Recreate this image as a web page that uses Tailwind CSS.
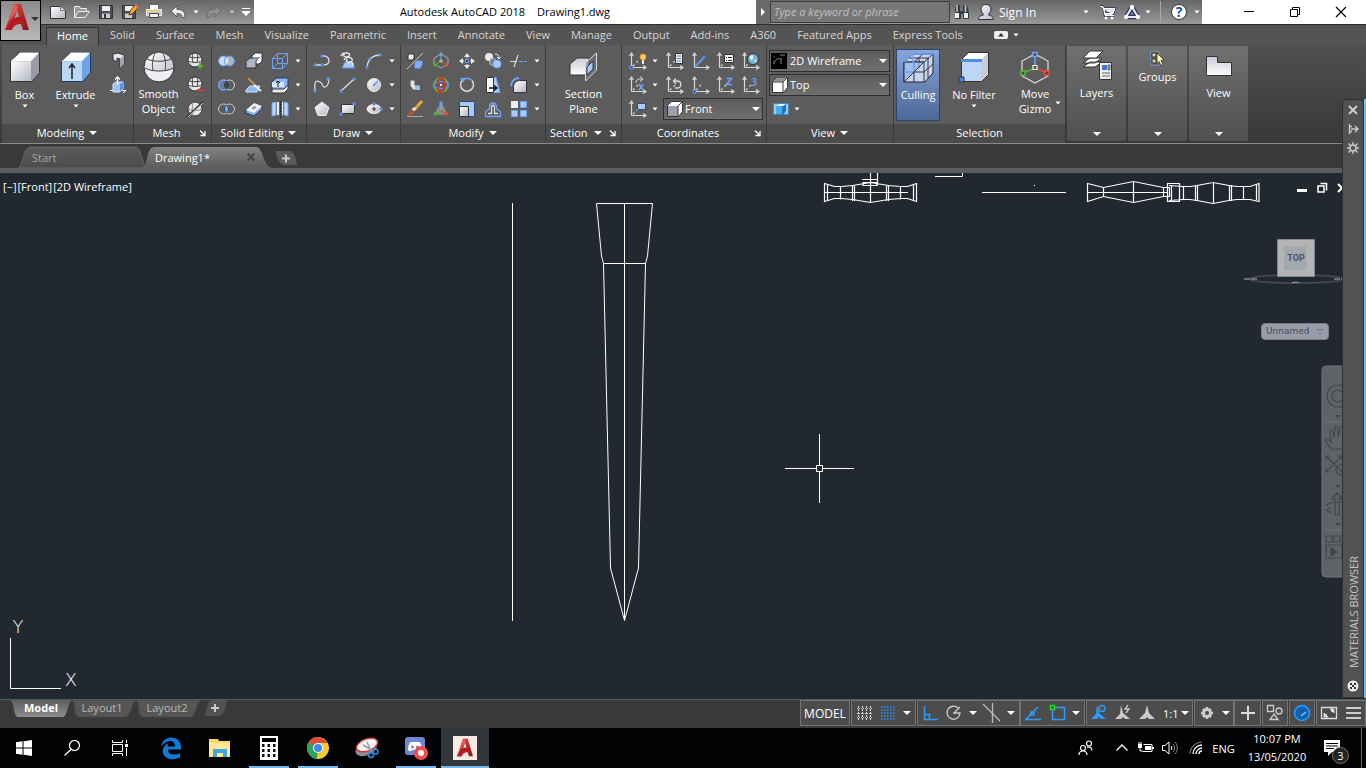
<!DOCTYPE html>
<html lang="en">
  <head>
    <meta charset="UTF-8" />
    <meta name="viewport" content="width=device-width, initial-scale=1.0" />
    <title>Autodesk AutoCAD 2018 - Drawing1.dwg</title>
    <script src="https://cdn.jsdelivr.net/npm/@tailwindcss/browser@4"></script>
  </head>
  <body class="bg-[#212830] font-['Open_Sans','Noto_Sans',sans-serif] text-[11px] leading-[15px] text-white">
    <!-- Shared gradients and arrows -->
    <svg class="absolute size-0" aria-hidden="true">
      <defs>
        <linearGradient id="lite" x1="0" y1="0" x2="1" y2="1"><stop offset="0" stop-color="#fff" /><stop offset="1" stop-color="#b4b7c2" /></linearGradient>
        <linearGradient id="liteV" x1="0" y1="0" x2="0" y2="1"><stop offset="0" stop-color="#c9cbd6" /><stop offset="1" stop-color="#fff" /></linearGradient>
        <linearGradient id="red" x1="0" y1="0" x2="1" y2="1"><stop offset="0" stop-color="#e8474a" /><stop offset="1" stop-color="#8f1216" /></linearGradient>
        <linearGradient id="tabOff" x1="0" y1="0" x2="0" y2="1"><stop offset="0" stop-color="#5a5a5a" /><stop offset="1" stop-color="#4c4c4c" /></linearGradient>
        <linearGradient id="tabOn" x1="0" y1="0" x2="0" y2="1"><stop offset="0" stop-color="#828282" /><stop offset="1" stop-color="#5c5c5c" /></linearGradient>
        <linearGradient id="tabModel" x1="0" y1="0" x2="0" y2="1"><stop offset="0" stop-color="#5e5e5e" /><stop offset="1" stop-color="#8c8c8c" /></linearGradient>
        <symbol id="dd" viewBox="0 0 8 8"><path d="M1.500 2.500h5L4 5.500z" fill="#fff" /></symbol>
        <symbol id="dn" viewBox="0 0 10 10"><path d="M1 3h8L5 7z" fill="#fff" /></symbol>
        <symbol id="corner" viewBox="0 0 8 8"><path d="M1 1.500l4 4M6 2v4.500H1.500" fill="none" stroke="#fff" stroke-width="1.300" /></symbol>
        <symbol id="acad" viewBox="0 0 24 28">
          <path d="M0 27L9 1h7l8 26h-6l-2-6c-4 0-7 1-9 6zM9 17c2-1 4-1 6-1l-3-9z" fill="url(#red)" />
          <path d="M0 27l7-10c3-3 8-4 12-3l1 4c-6-1-11 0-14 9z" fill="#b5171c" />
          <path d="M9 1l-6 18 8-10 1-2 1-4z" fill="#ef6a6a" opacity=".7" />
        </symbol>
        <!-- axes used by all the UCS icons -->
        <symbol id="axes" viewBox="0 0 24 24"><path d="M5.500 18.500V5M3.500 7l2-3 2 3M5.500 18.500H19M17 16.500l3 2-3 2M7 17l1.500-1.500M10.500 13.500L12 12" fill="none" stroke="#d8d8d8" stroke-width="1.200" /></symbol>
      </defs>
    </svg>

    <div class="relative flex min-h-screen flex-col">
      <!-- Title bar -->
      <header class="flex h-6 bg-white">
        <nav class="flex w-[254px] items-center bg-linear-to-b from-[#666] to-[#999] pl-[46px]">
          <button class="w-6" aria-label="New"><svg class="size-6" viewBox="0 0 24 24"><path d="M4.500 6.500h10l5 4v8h-15z" fill="url(#lite)" stroke="#333" /><path d="M14.500 6.500v4h5" fill="#ddd" stroke="#777" /></svg></button>
          <button class="w-6" aria-label="Open"><svg class="size-6" viewBox="0 0 24 24"><path d="M4.500 17.500v-11h5l1 2h6v3" fill="#999" stroke="#eee" /><path d="M4.500 17.500l4-6h11l-4.500 6z" fill="#888" stroke="#eee" /></svg></button>
          <button class="w-6" aria-label="Save"><svg class="size-6" viewBox="0 0 24 24"><path d="M5.500 5.500h13v13h-13z" fill="#4a4e58" stroke="#333" /><path d="M8 6h8v5H8z" fill="#eee" /><path d="M8 13.500h8V18H8z" fill="#ccc" /><path d="M10 14h2v4h-2z" fill="#333" /></svg></button>
          <button class="w-6" aria-label="Save As"><svg class="size-6" viewBox="0 0 24 24"><path d="M4.500 5.500h13v13h-13z" fill="#4a4e58" stroke="#333" /><path d="M7 6h8v5H7z" fill="#eee" /><path d="M7 13.500h7V18H7z" fill="#ccc" /><path d="M11 15l1-4 5-6 3 3-6 6z" fill="#f0a92c" stroke="#5b3a10" /><path d="M17 5l3 3" stroke="#f66" stroke-width="2" /></svg></button>
          <button class="w-6" aria-label="Plot"><svg class="size-6" viewBox="0 0 24 24"><path d="M7.500 4.500h9v5h-9z" fill="#fff" stroke="#666" /><path d="M4.500 9.500h15v6h-15z" fill="#c6c8ce" stroke="#eee" /><path d="M7.500 13.500h9v4h-9z" fill="#f5f5f5" stroke="#444" /><path d="M6 11.500h12" stroke="#f2e34a" stroke-dasharray="1 1" /></svg></button>
          <button class="w-6" aria-label="Undo"><svg class="size-6" viewBox="0 0 24 24"><path d="M5 11l6-5v3.500c5 0 8 1 8 8h-3c0-3-1-4-5-4V17z" fill="#eee" stroke="#444" stroke-width=".8" /></svg></button>
          <button class="w-3" aria-label="Undo list"><svg class="mx-auto size-2"><use href="#dd" /></svg></button>
          <button class="w-6" aria-label="Redo"><svg class="size-6" viewBox="0 0 24 24"><path d="M19 11l-6-5v3.500c-5 0-8 1-8 8h3c0-3 1-4 5-4V17z" fill="#8f8f8f" stroke="#666" stroke-width=".8" /></svg></button>
          <button class="w-3 opacity-60" aria-label="Redo list"><svg class="mx-auto size-2"><use href="#dd" /></svg></button>
          <button class="w-4" aria-label="Customize Quick Access Toolbar"><svg class="mx-auto size-3" viewBox="0 0 12 12"><path d="M2 2.500h8M2 5.500h8L6 9.500z" fill="#fff" stroke="#fff" /></svg></button>
        </nav>
        <h1 class="flex flex-1 items-center justify-center gap-3 pb-0.5 whitespace-pre text-black"><span>Autodesk AutoCAD 2018</span><span>Drawing1.dwg</span></h1>
        <div class="flex w-[446px] shrink-0 items-center bg-linear-to-b from-[#666] to-[#999]">
          <button class="flex h-6 w-[14px] shrink-0 items-center justify-center bg-[#6a6a6a]" aria-label="Collapse search"><svg class="h-2 w-1.5" viewBox="0 0 6 8"><path d="M1 0l4 4-4 4z" fill="#fff" /></svg></button>
          <input type="text" aria-label="Search" placeholder="Type a keyword or phrase" class="h-[22px] w-[180px] shrink-0 border border-[#3c3c3c] bg-[#777] px-[3px] pb-0.5 text-[11px] italic outline-none placeholder:text-[#c0c0c0]" />
          <button class="w-6" aria-label="Find"><svg class="size-6" viewBox="0 0 24 24"><path d="M5 9l1-4h4v6h3V5h4l1 4 1 4v6h-6v-5h-2v5H5v-6z" fill="#333a48" /><path d="M5 13h4v5H5zM14 13h4v5h-4z" fill="#f2f2f2" /><path d="M7 5v7M15.500 5v7" stroke="#ccc" stroke-width="1.500" /></svg></button>
          <button class="flex w-[116px] shrink-0 items-center" type="button"><svg class="size-6" viewBox="0 0 24 24"><path d="M4.500 19.500c0-4 4-4 5-4.500 0-1-2.500-3-2.500-6 0-6 10-6 10 0 0 3-2.500 5-2.500 6 1 .5 5 .5 5 4.500z" fill="url(#lite)" stroke="#2b3140" /></svg><span class="ml-px text-[12px]">Sign In</span><svg class="ml-auto size-2"><use href="#dd" /></svg></button>
          <button class="ml-1.5 w-6" aria-label="App Store"><svg class="size-6" viewBox="0 0 24 24"><path d="M4 6.500h3l2 9h9M8 8.500h11l-2 5H9z" fill="#aebbd4" stroke="#28375c" stroke-width="2.500" /><path d="M4 6.500h3l2 9h9M8 8.500h11l-2 5H9z" fill="#dde5f2" stroke="#fff" /><circle cx="10" cy="18" r="1.500" fill="#fff" /><circle cx="16" cy="18" r="1.500" fill="#fff" /></svg></button>
          <button class="flex w-9 items-center" aria-label="Autodesk 360"><svg class="size-6" viewBox="0 0 24 24"><path d="M12 7l6 10H6z" fill="none" stroke="#28375c" stroke-width="4.500" stroke-linejoin="round" /><path d="M12 7l6 10H6z" fill="none" stroke="#e8edf7" stroke-width="2" /><circle cx="12" cy="7" r="2.200" fill="#fff" /><circle cx="18" cy="17" r="2.200" fill="#fff" /><circle cx="6" cy="17" r="2.200" fill="#fff" /></svg><svg class="size-2"><use href="#dd" /></svg></button>
          <button class="ml-1 flex h-[22px] items-center border-l border-[#aaa] pl-1.5" aria-label="Help"><svg class="size-6" viewBox="0 0 24 24"><circle cx="12" cy="12" r="7.500" fill="#fff" stroke="#333" /><text x="12" y="17" text-anchor="middle" font-size="14" font-weight="700" fill="#1d4fb0">?</text></svg><svg class="ml-0.5 size-2"><use href="#dd" /></svg></button>
        </div>
        <div class="mr-0.5 ml-6 flex text-black">
          <button class="w-[46px]" aria-label="Minimize"><svg class="mx-auto size-3" viewBox="0 0 12 12"><path d="M1 5.500h10" stroke="#000" /></svg></button>
          <button class="w-[46px]" aria-label="Restore"><svg class="mx-auto size-3" viewBox="0 0 12 12"><path d="M1.500 3.500h7v7h-7zM3.500 3V1.500h7v7H9" fill="none" stroke="#000" /></svg></button>
          <button class="w-[46px]" aria-label="Close"><svg class="mx-auto size-3" viewBox="0 0 12 12"><path d="M1 1l10 10M11 1L1 11" stroke="#000" stroke-width="1.200" /></svg></button>
        </div>
      </header>

      <!-- Application menu button, over the title bar and the tabs -->
      <button class="absolute top-0 left-0 flex size-[41px] items-center border border-black bg-linear-to-b from-[#8c8c8c] to-[#b8b8b8] pb-2 pl-1" aria-label="Application menu">
        <svg class="h-[28px] w-6"><use href="#acad" /></svg>
        <svg class="ml-0.5 h-2 w-2" viewBox="0 0 8 8"><path d="M0 4h8L4 8z" fill="#2f3542" /></svg>
      </button>

      <!-- Ribbon tabs -->
      <nav class="flex h-[21px] items-end gap-px border-t border-[#2e2e2e] bg-[#545454] pl-[46px] text-[#d6d6d6]">
        <button class="h-[18px] w-[53px] border border-b-0 border-[#333] bg-[#606060] pb-[3px] text-white">Home</button>
        <button class="h-[18px] px-[10px] pb-1">Solid</button>
        <button class="h-[18px] px-[10px] pb-1">Surface</button>
        <button class="h-[18px] px-[10px] pb-1">Mesh</button>
        <button class="h-[18px] px-[10px] pb-1">Visualize</button>
        <button class="h-[18px] px-[10px] pb-1">Parametric</button>
        <button class="h-[18px] px-[10px] pb-1">Insert</button>
        <button class="h-[18px] px-[10px] pb-1">Annotate</button>
        <button class="h-[18px] px-[10px] pb-1">View</button>
        <button class="h-[18px] px-[10px] pb-1">Manage</button>
        <button class="h-[18px] px-[10px] pb-1">Output</button>
        <button class="h-[18px] px-[10px] pb-1">Add-ins</button>
        <button class="h-[18px] px-[10px] pb-1">A360</button>
        <button class="h-[18px] px-[10px] pb-1">Featured Apps</button>
        <button class="h-[18px] px-[10px] pb-1">Express Tools</button>
        <button class="ml-5 flex h-[18px] items-center gap-1 pb-0.5" aria-label="Minimize ribbon"><svg class="h-2 w-[14px]" viewBox="0 0 14 8"><rect width="14" height="8" rx="2" fill="#eee" /><path d="M4 5.500h6L7 2z" fill="#333" /></svg><svg class="size-2"><use href="#dd" /></svg></button>
      </nav>

      <!-- Ribbon panels -->
      <div class="flex h-[99px] border-b border-[#8a8a8a] bg-linear-to-b from-[#505050] to-[#383838] pl-0.5">
        <section class="flex w-[132px] shrink-0 flex-col border-r border-[#3b3b3b] bg-[#5c5c5c]">
          <div class="flex flex-1 pt-1">
            <button class="flex w-[45px] flex-col items-center"><svg class="size-9" viewBox="0 0 36 36"><path d="M3.500 12.500l9-9h20v20l-8 9h-21z" fill="#c3c5ce" stroke="#333" /><path d="M4 12l9-8.500h19L24 12z" fill="#fff" /><path d="M4 12.500h20V32H4z" fill="url(#lite)" /><path d="M24 12.500l8-8.500v19l-8 9z" fill="#999ca8" /></svg><span class="mt-0.5">Box</span><svg class="size-2"><use href="#dd" /></svg></button>
            <button class="flex w-[57px] flex-col items-center"><svg class="size-9" viewBox="0 0 36 36"><path d="M3.500 12.500l9-9h20v20l-8 9h-21z" fill="#9cc3f2" stroke="#1f3a66" /><path d="M4 12l9-8.500h19L24 12z" fill="#fff" /><path d="M4 12.500h20V32H4z" fill="#bcd7f5" /><path d="M24 12.500l8-8.500v19l-8 9z" fill="#6fa4e4" /><path d="M14 30V16M11 19l3-4 3 4" fill="none" stroke="#222" stroke-width="1.500" /></svg><span class="mt-0.5">Extrude</span><svg class="size-2"><use href="#dd" /></svg></button>
            <div class="flex flex-1 flex-col items-center">
              <button aria-label="Polysolid"><svg class="block size-6" viewBox="0 0 24 24"><path d="M6 5l5-1 6 2v9l-4 4v-9l-3-1v4l-4-2z" fill="#e4e5ea" stroke="#333" /><path d="M13 10l4-4v9l-4 4z" fill="#a4a7b2" /></svg></button>
              <button aria-label="Presspull"><svg class="block size-6" viewBox="0 0 24 24"><path d="M3 17.500h16l-3 2.500" fill="none" stroke="#fff" /><path d="M6 11l3-2h7v7l-3 3H6z" fill="#9cc3f2" stroke="#d5e7ff" /><path d="M13 11l3-2v7l-3 3z" fill="#5b93e6" /><path d="M10.500 12V4M8 6.500L10.500 4 13 6.500" fill="none" stroke="#fff" stroke-width="1.300" /></svg></button>
            </div>
          </div>
          <h2 class="flex h-[19px] items-center justify-center gap-1 bg-[#4b4b4b] pb-0.5">Modeling <svg class="size-2.5"><use href="#dn" /></svg></h2>
        </section>

        <section class="flex w-[78px] shrink-0 flex-col border-r border-[#3b3b3b] bg-[#5c5c5c]">
          <div class="flex flex-1 pt-1">
            <button class="flex w-[52px] flex-col items-center"><svg class="size-9" viewBox="0 0 36 36"><circle cx="18" cy="18" r="15" fill="url(#lite)" stroke="#333" /><path d="M4 19c6 4 22 4 28 0M6 10c6 3 18 3 24 0M14 4c-3 7-3 12-2 18M22 4c3 7 3 12 2 18" fill="none" stroke="#444" /><path d="M4 20c6 4 22 4 28 0-1 7-6 12-14 12S5 27 4 20z" fill="#eeeef3" /></svg><span class="mt-px">Smooth<br />Object</span></button>
            <div class="flex flex-1 flex-col items-center pr-1">
              <button aria-label="Smooth More"><svg class="block size-6" viewBox="0 0 24 24"><circle cx="12" cy="11" r="7" fill="#e8e8ec" stroke="#333" /><path d="M5 12c4 2 10 2 14 0M6 8c4 1 8 1 12 0M10 4c-1 4-1 6 0 9M14 4c1 4 1 6 0 9" fill="none" stroke="#444" /><path d="M17 14v6M14 17h6" stroke="#5db524" stroke-width="2" /></svg></button>
              <button aria-label="Smooth Less"><svg class="block size-6" viewBox="0 0 24 24"><circle cx="12" cy="11" r="7" fill="#e8e8ec" stroke="#333" /><path d="M5 12c4 2 10 2 14 0M6 8c4 1 8 1 12 0M10 4c-1 4-1 6 0 9M14 4c1 4 1 6 0 9" fill="none" stroke="#444" /><path d="M14 17h6" stroke="#e03a20" stroke-width="2" /></svg></button>
              <button aria-label="Refine Mesh"><svg class="block size-6" viewBox="0 0 24 24"><circle cx="12" cy="12" r="7" fill="#e8e8ec" stroke="#333" /><path d="M5 12c4 2 10 2 14 0M10 5c-1 4-1 10 0 14" fill="none" stroke="#888" /><path d="M4 20L20 5" stroke="#333" stroke-width="2" /><path d="M5 20L20 6" stroke="#ddd" /></svg></button>
            </div>
          </div>
          <h2 class="flex h-[19px] items-center bg-[#4b4b4b] pr-1 pb-0.5"><span class="flex-1 text-center">Mesh</span><svg class="size-2"><use href="#corner" /></svg></h2>
        </section>

        <section class="flex w-[95px] shrink-0 flex-col border-r border-[#3b3b3b] bg-[#5c5c5c]">
          <div class="grid flex-1 grid-cols-[28px_27px_26px_9px] content-start items-center justify-items-center pt-1">
            <button aria-label="Union"><svg class="block size-6" viewBox="0 0 24 24"><circle cx="9.500" cy="12" r="5" fill="#c9dcf7" stroke="#5b93e6" /><circle cx="15.500" cy="12" r="5" fill="#e5eefb" fill-opacity=".6" stroke="#5b93e6" /></svg></button>
            <button aria-label="Extrude Faces"><svg class="block size-6" viewBox="0 0 24 24"><path d="M10 7l3-3h7v8l-3 3h-7z" fill="#fff" stroke="#333" /><path d="M4 12l4-3h9l-3 3v7H4z" fill="#b4b7c2" stroke="#333" /><path d="M10 10h6l2-2" stroke="#6aa0ee" fill="none" /></svg></button>
            <button aria-label="Extract Edges"><svg class="block size-6" viewBox="0 0 24 24"><path d="M4.500 9.500h10v10h-10zM9.500 4.500h10v10h-10zM4.500 9.500l5-5M14.500 9.500l5-5M14.500 19.500l5-5M4.500 19.500l5-5" fill="none" stroke="#6ea4ff" /></svg></button>
            <svg class="size-2"><use href="#dd" /></svg>
            <button aria-label="Subtract"><svg class="block size-6" viewBox="0 0 24 24"><circle cx="15.500" cy="12" r="5" fill="none" stroke="#d5d5d5" /><circle cx="9.500" cy="12" r="5" fill="#7faae8" fill-opacity=".4" stroke="#6ea4ff" stroke-width="1.300" /><path d="M12.500 8a5 5 0 000 8 5 5 0 000-8z" fill="#444" stroke="#333" /></svg></button>
            <button aria-label="Slice"><svg class="block size-6" viewBox="0 0 24 24"><path d="M4 17l4-4h10l-3 6H4z" fill="#8bb8f2" stroke="#d5e7ff" /><path d="M6 5l8 8" stroke="#c08a4a" stroke-width="2" /><path d="M12 12l7 6" stroke="#eee" stroke-width="2" /></svg></button>
            <button aria-label="Taper Faces"><svg class="block size-6" viewBox="0 0 24 24"><path d="M4 9l4-4h12v8l-4 4H4z" fill="#8bb8f2" stroke="#223a60" /><path d="M4 9h12v5H4z" fill="#d5e7ff" /><path d="M4 16h12l4-4v4l-4 4H4z" fill="#eee" stroke="#333" /><path d="M10 14V8M8 10l2-2 2 2" stroke="#111" fill="none" /></svg></button>
            <svg class="size-2"><use href="#dd" /></svg>
            <button aria-label="Intersect"><svg class="block size-6" viewBox="0 0 24 24"><circle cx="9.500" cy="12" r="5" fill="none" stroke="#ccc" /><circle cx="15.500" cy="12" r="5" fill="none" stroke="#ccc" /><path d="M12.500 8a5 5 0 000 8 5 5 0 000-8z" fill="#7fb0f2" stroke="#1d3c70" /></svg></button>
            <button aria-label="Thicken"><svg class="block size-6" viewBox="0 0 24 24"><path d="M4 13l8-7 8 3v3l-8 7-8-3z" fill="#7fb0f2" stroke="#223a60" /><path d="M4 13l8-7 8 3-8 7z" fill="#f2f2f2" /><path d="M9 11.500l3-2.500 3 1-3 2.500z" fill="#999" /></svg></button>
            <button aria-label="Offset Faces"><svg class="block size-6" viewBox="0 0 24 24"><path d="M4 6l4-1v13l-4 1zM16 5l4 1v13l-4-1z" fill="#b9d5f8" stroke="#6ea4ff" /><path d="M9 5h2v13H9zM14 5h1v13h-1z" fill="#eee" /><path d="M12.500 4v17" stroke="#222" stroke-dasharray="2 1" /></svg></button>
            <svg class="size-2"><use href="#dd" /></svg>
          </div>
          <h2 class="flex h-[19px] items-center justify-center gap-1 bg-[#4b4b4b] pb-0.5">Solid Editing <svg class="size-2.5"><use href="#dn" /></svg></h2>
        </section>

        <section class="flex w-[94px] shrink-0 flex-col border-r border-[#3b3b3b] bg-[#5c5c5c]">
          <div class="grid flex-1 grid-cols-[26px_26px_26px_9px] content-start items-center justify-items-center pt-1 pl-0.5">
            <button aria-label="Polyline"><svg class="block size-6" viewBox="0 0 24 24"><path d="M5 16h8M12 7c9-1 9 9 2 9" fill="none" stroke="#e0e0e0" stroke-width="1.300" /><path d="M4 15h2v2H4zM11 15h2v2h-2zM11 6h2v2h-2z" fill="#24407a" stroke="#6ea4ff" /></svg></button>
            <button aria-label="Helix"><svg class="block size-6" viewBox="0 0 24 24"><path d="M6 19l3-6h6l4 6z" fill="#a8c8f2" stroke="#5b93e6" /><path d="M5 7c2-5 11-3 8 0-3 2-8 0-4-2M8 11c2-4 10-3 8 1-2 2-7 1-5-2M12 15c1-3 6-2 5 2" fill="none" stroke="#eee" stroke-width="1.300" /></svg></button>
            <button aria-label="Arc"><svg class="block size-6" viewBox="0 0 24 24"><path d="M5 18C6 10 11 6 19 6" fill="none" stroke="#ddd" stroke-width="1.300" /><path d="M4 17h2v2H4zM7 9h2v2H7zM17 5h2v2h-2z" fill="#24407a" stroke="#6ea4ff" /></svg></button>
            <svg class="size-2"><use href="#dd" /></svg>
            <button aria-label="Spline"><svg class="block size-6" viewBox="0 0 24 24"><path d="M5 18c-1-10 1-11 5-9s2 6 5 5 4-5 4-9" fill="none" stroke="#ddd" stroke-width="1.300" /><path d="M4 17h2v2H4zM17 5h2v2h-2z" fill="#24407a" stroke="#6ea4ff" /></svg></button>
            <button aria-label="Line"><svg class="block size-6" viewBox="0 0 24 24"><path d="M5 18L18 6" stroke="#ddd" stroke-width="1.300" /><path d="M4 17h2v2H4zM17 5h2v2h-2z" fill="#24407a" stroke="#6ea4ff" /></svg></button>
            <button aria-label="Circle"><svg class="block size-6" viewBox="0 0 24 24"><circle cx="12" cy="12" r="6.500" fill="url(#lite)" stroke="#eee" /><path d="M12 12l4-4" stroke="#5b93e6" stroke-width="1.500" /><path d="M11 11h2v2h-2z" fill="#5b93e6" /></svg></button>
            <svg class="size-2"><use href="#dd" /></svg>
            <button aria-label="Polygon"><svg class="block size-6" viewBox="0 0 24 24"><path d="M12 5l7 5.500-3 8H8l-3-8z" fill="url(#lite)" stroke="#eee" /></svg></button>
            <button aria-label="Rectangle"><svg class="block size-6" viewBox="0 0 24 24"><path d="M5.500 7.500h13v9h-13z" fill="url(#lite)" stroke="#333" /><path d="M4 16h2v2H4zM17 6h2v2h-2z" fill="#24407a" stroke="#6ea4ff" /></svg></button>
            <button aria-label="Ellipse"><svg class="block size-6" viewBox="0 0 24 24"><ellipse cx="12" cy="12" rx="7" ry="4.500" fill="url(#lite)" stroke="#eee" /><path d="M10 12h4M12 10v4" stroke="#333" /><path d="M11 6h2v2h-2zM18 11h2v2h-2z" fill="#24407a" stroke="#6ea4ff" /></svg></button>
            <svg class="size-2"><use href="#dd" /></svg>
          </div>
          <h2 class="flex h-[19px] items-center justify-center gap-1 bg-[#4b4b4b] pb-0.5">Draw <svg class="size-2.5"><use href="#dn" /></svg></h2>
        </section>

        <section class="flex w-[145px] shrink-0 flex-col border-r border-[#3b3b3b] bg-[#5c5c5c]">
          <div class="grid flex-1 grid-cols-[26px_26px_26px_26px_26px_9px] content-start items-center justify-items-center pt-1 pl-px">
            <button aria-label="3D Mirror"><svg class="block size-6" viewBox="0 0 24 24"><path d="M4 20L20 4" stroke="#ccc" /><path d="M5 6l1-1h5v4l-1 2H5z" fill="#eee" stroke="#333" /><path d="M12 14l2-2h5v4l-2 3h-5z" fill="#7fb0f2" stroke="#6ea4ff" /></svg></button>
            <button aria-label="3D Move"><svg class="block size-6" viewBox="0 0 24 24"><path d="M12 5l7 4v6l-7 4-7-4V9z" fill="none" stroke="#aaa" /><path d="M12 12V5" stroke="#6ea4ff" /><path d="M12 12l-6 4" stroke="#5ab52a" /><path d="M12 12l6 4" stroke="#ee4b2a" /><path d="M11 4h2v2h-2z" fill="none" stroke="#6ea4ff" /><path d="M5 15h2v2H5z" fill="none" stroke="#5ab52a" /><path d="M17 15h2v2h-2z" fill="none" stroke="#ee4b2a" /><path d="M11 11h2v2h-2z" fill="#555" stroke="#ccc" /></svg></button>
            <button aria-label="Move"><svg class="block size-6" viewBox="0 0 24 24"><path d="M12 4l3 4H9zM12 20l3-4H9zM4 12l4-3v6zM20 12l-4-3v6z" fill="#eee" /><path d="M12 7v2M12 15v2M7 12h2M15 12h2" stroke="#eee" /><path d="M10.500 10.500h3v3h-3z" fill="#24407a" stroke="#6ea4ff" /></svg></button>
            <button aria-label="Copy"><svg class="block size-6" viewBox="0 0 24 24"><circle cx="8" cy="8" r="4" fill="#e8e8ec" /><circle cx="12" cy="13" r="3.500" fill="#777b88" stroke="#bbb" /><circle cx="16" cy="15" r="4" fill="#a9caf5" stroke="#6ea4ff" /><path d="M14 5c3 0 4 2 4 4M16 8l2 2 2-2" fill="none" stroke="#eee" /></svg></button>
            <button aria-label="Trim"><svg class="block size-6" viewBox="0 0 24 24"><path d="M3 12.500h7M7 18l4-12" stroke="#ddd" stroke-width="1.200" /><path d="M12 12.500h8" stroke="#6ea4ff" stroke-dasharray="4 1.500" /></svg></button>
            <svg class="size-2"><use href="#dd" /></svg>
            <button aria-label="3D Align"><svg class="block size-6" viewBox="0 0 24 24"><path d="M7 7h5v5h5v5h-7l-3-4z" fill="#dfe1e8" stroke="#555" /><path d="M12 13h5v4h-5z" fill="#9fc0ec" /></svg></button>
            <button aria-label="3D Rotate"><svg class="block size-6" viewBox="0 0 24 24"><circle cx="12" cy="12" r="7" fill="none" stroke="#5ab52a" stroke-width="1.800" /><ellipse cx="12" cy="12" rx="7.500" ry="3.500" fill="none" stroke="#5b93e6" stroke-width="1.600" /><ellipse cx="12" cy="12" rx="3.500" ry="7.500" fill="none" stroke="#e02b1c" stroke-width="1.600" /><path d="M11 11h2v2h-2z" fill="#eee" /></svg></button>
            <button aria-label="Rotate"><svg class="block size-6" viewBox="0 0 24 24"><path d="M7 7.500a6.500 6.500 0 1010 0" fill="none" stroke="#ddd" stroke-width="1.500" /><path d="M10 5.700c3-1 5 0 7 1.800" fill="none" stroke="#6ea4ff" stroke-width="1.500" /><path d="M5 5h6l-3 5z" fill="#6ea4ff" /></svg></button>
            <button aria-label="Stretch"><svg class="block size-6" viewBox="0 0 24 24"><path d="M12 4.500l3 0 4 15h-7z" fill="#a9caf5" stroke="#6ea4ff" /><path d="M5.500 4.500h7v15h-7z" fill="#fff" stroke="#333" /><path d="M8 15h7M13 12.500l3 2.500-3 2.500" stroke="#111" stroke-width="1.300" fill="none" /></svg></button>
            <button aria-label="Fillet"><svg class="block size-6" viewBox="0 0 24 24"><path d="M6.500 19.500v-6c0-3 3-6 6-6h7v12z" fill="url(#lite)" stroke="#333" /><path d="M4 13c0-5 4-8 8-8" fill="none" stroke="#6ea4ff" stroke-width="2" /></svg></button>
            <svg class="size-2"><use href="#dd" /></svg>
            <button aria-label="Erase"><svg class="block size-6" viewBox="0 0 24 24"><path d="M4 19.500h16" stroke="#aaa" /><path d="M19 4l-8 9" stroke="#e7a441" stroke-width="3" /><path d="M12 11l-3 3" stroke="#eee" stroke-width="3" /><path d="M9 12l3 3-4 3-4 1 3-4z" fill="#c2541f" /></svg></button>
            <button aria-label="3D Scale"><svg class="block size-6" viewBox="0 0 24 24"><path d="M12 6l-6 11h12z" fill="#888" stroke="#999" /><path d="M12 6v8" stroke="#6ea4ff" stroke-width="1.500" /><path d="M12 14l-6 3" stroke="#5ab52a" stroke-width="1.500" /><path d="M12 14l6 3" stroke="#ee4b2a" stroke-width="1.500" /><path d="M11 5h2v2h-2z" fill="none" stroke="#6ea4ff" /><path d="M5 16h2v2H5z" fill="none" stroke="#5ab52a" /><path d="M17 16h2v2h-2z" fill="none" stroke="#ee4b2a" /></svg></button>
            <button aria-label="Scale"><svg class="block size-6" viewBox="0 0 24 24"><path d="M4.500 4.500h15v15h-15z" fill="#a9caf5" stroke="#2f4d86" /><path d="M4.500 9.500h9v10h-9z" fill="url(#lite)" stroke="#333" /></svg></button>
            <button aria-label="Offset"><svg class="block size-6" viewBox="0 0 24 24"><path d="M4.500 19.500v-4c0-3 4-1 4-5 0-6 7-6 7 0 0 4 4 2 4 5v4z" fill="none" stroke="#6ea4ff" stroke-width="1.300" /><path d="M7 16.500h3.500v-6c0-3 3-3 3 0v6H17" fill="none" stroke="#ddd" stroke-width="1.300" /></svg></button>
            <button aria-label="Array"><svg class="block size-6" viewBox="0 0 24 24"><path d="M4 4h7v7H4z" fill="#eee" /><path d="M13.500 4.500h6v6h-6zM4.500 13.500h6v6h-6zM13.500 13.500h6v6h-6z" fill="#a9caf5" stroke="#6ea4ff" /></svg></button>
            <svg class="size-2"><use href="#dd" /></svg>
          </div>
          <h2 class="flex h-[19px] items-center justify-center gap-1 bg-[#4b4b4b] pb-0.5">Modify <svg class="size-2.5"><use href="#dn" /></svg></h2>
        </section>

        <section class="flex w-[76px] shrink-0 flex-col border-r border-[#3b3b3b] bg-[#5c5c5c]">
          <div class="flex flex-1 justify-center pt-1">
            <button class="flex flex-col items-center"><svg class="size-9" viewBox="0 0 36 36"><path d="M5 15l7-6h12v13l-4 4H5z" fill="url(#liteV)" stroke="#333" /><path d="M20.500 14l11-10v17l-11 11z" fill="#777" fill-opacity=".6" stroke="#ddd" /><path d="M22 18l6-6v8l-6 6z" fill="#a9caf5" stroke="#223a60" /></svg><span class="mt-px">Section<br />Plane</span></button>
          </div>
          <h2 class="flex h-[19px] items-center justify-between bg-[#4b4b4b] px-1 pb-0.5">Section <svg class="size-2.5"><use href="#dn" /></svg><svg class="size-2"><use href="#corner" /></svg></h2>
        </section>

        <section class="flex w-[145px] shrink-0 flex-col border-r border-[#3b3b3b] bg-[#5c5c5c]">
          <div class="grid flex-1 grid-cols-[25px_8px_4px_26px_25px_25px_24px] content-start items-center pt-1 pl-1">
            <button aria-label="UCS"><svg class="block size-6" viewBox="0 0 24 24"><use href="#axes" /><path d="M4 17h3v3H4z" fill="#24407a" stroke="#6ea4ff" /><circle cx="17" cy="8" r="3" fill="#ffd75a" stroke="#f08a24" /><path d="M17 11v4" stroke="#eee" stroke-width="2" /></svg></button>
            <svg class="size-2"><use href="#dd" /></svg><span></span>
            <button aria-label="Named UCS"><svg class="block size-6" viewBox="0 0 24 24"><use href="#axes" /><path d="M12.500 4.500h7v10h-7z" fill="#eee" stroke="#333" /><path d="M14 7h4M14 9.500h4M14 12h4" stroke="#5b79b5" /></svg></button>
            <button aria-label="UCS World"><svg class="block size-6" viewBox="0 0 24 24"><use href="#axes" /><path d="M6 18L16 7" stroke="#5b93e6" stroke-width="2" /></svg></button>
            <button aria-label="UCS Previous"><svg class="block size-6" viewBox="0 0 24 24"><use href="#axes" /><path d="M10.500 5.500h9v8h-9z" fill="#eee" stroke="#333" /><path d="M12 8.500h1M14 8.500h4M12 11.500h1M14 11.500h4" stroke="#333" /></svg></button>
            <button aria-label="UCS Object"><svg class="block size-6" viewBox="0 0 24 24"><use href="#axes" /><circle cx="14" cy="10" r="5.500" fill="#6fb7d8" stroke="#333" /><path d="M11 7c3-2 4 1 3 3s-2 1-3 0zM15 11c2-1 3 0 2 3z" fill="#dff2dc" /></svg></button>
            <button aria-label="Rotate X"><svg class="block size-6" viewBox="0 0 24 24"><use href="#axes" /><path d="M10 10c0-4 3-4 6-4M14 3.500l3 2.500-3 2.500" fill="none" stroke="#ddd" /><path d="M13 11l4 6M17 11l-4 6" stroke="#6ea4ff" stroke-width="1.500" /></svg></button>
            <svg class="size-2"><use href="#dd" /></svg><span></span>
            <button aria-label="UCS Undo"><svg class="block size-6" viewBox="0 0 24 24"><use href="#axes" /><path d="M12 15h2c5 0 5-7 0-7h-3M13 5.500L10.500 8l2.500 3" fill="none" stroke="#ddd" stroke-width="1.300" /></svg></button>
            <button aria-label="Origin"><svg class="block size-6" viewBox="0 0 24 24"><use href="#axes" /><path d="M4 17h3v3H4z" fill="#24407a" stroke="#6ea4ff" /></svg></button>
            <button aria-label="Z-Axis Vector"><svg class="block size-6" viewBox="0 0 24 24"><use href="#axes" /><path d="M12.500 5.500h5l-5 6h5.500" fill="none" stroke="#6ea4ff" stroke-width="1.600" /></svg></button>
            <button aria-label="3 Point"><svg class="block size-6" viewBox="0 0 24 24"><use href="#axes" /><text x="15" y="13" text-anchor="middle" font-size="10" font-weight="600" fill="#6ea4ff">3</text></svg></button>
            <button aria-label="UCS View"><svg class="block size-6" viewBox="0 0 24 24"><use href="#axes" /><path d="M11.500 6.500h8v6h-8z" fill="#a9caf5" stroke="#2f4d86" /></svg></button>
            <svg class="size-2"><use href="#dd" /></svg><span></span>
            <div class="relative col-span-4">
              <select aria-label="Named UCS" class="block h-[22px] w-full appearance-none border border-[#2f2f2f] bg-linear-to-b from-[#5c5c5c] to-[#707070] pb-0.5 pl-[21px] text-[11px] leading-[15px]"><option>Front</option></select>
              <svg class="pointer-events-none absolute top-0.5 left-[3px] size-[18px]" viewBox="0 0 18 18"><path d="M1.500 5.500l4-4h11v10l-4 5h-11z" fill="#fff" stroke="#333" /><path d="M2 6h10v10H2z" fill="#9aa1ad" /><path d="M12 6l4-4M12 6v10" stroke="#333" /></svg>
              <svg class="pointer-events-none absolute top-1.5 right-0.5 size-2.5"><use href="#dn" /></svg>
            </div>
          </div>
          <h2 class="flex h-[19px] items-center bg-[#4b4b4b] pr-1 pb-0.5"><span class="flex-1 text-center">Coordinates</span><svg class="size-2"><use href="#corner" /></svg></h2>
        </section>

        <section class="flex w-[127px] shrink-0 flex-col border-r border-[#3b3b3b] bg-[#5c5c5c]">
          <div class="flex flex-1 flex-col gap-0.5 pt-[5px] pr-[3px] pl-0.5">
            <div class="relative">
              <select aria-label="Visual style" class="block h-[22px] w-full appearance-none border border-[#2f2f2f] bg-linear-to-b from-[#5c5c5c] to-[#707070] pb-0.5 pl-[20px] text-[11px] leading-[15px]"><option>2D Wireframe</option></select>
              <svg class="pointer-events-none absolute top-[3px] left-0.5 size-4" viewBox="0 0 16 16"><path d="M0 0h16v16H0z" fill="#000" /><path d="M3 11c1-5 4-6 8-5M9 2h5M10 6v5M3 4h1M2 9h1" stroke="#888" fill="none" /></svg>
              <svg class="pointer-events-none absolute top-1.5 right-0.5 size-2.5"><use href="#dn" /></svg>
            </div>
            <div class="relative">
              <select aria-label="View" class="block h-[22px] w-full appearance-none border border-[#2f2f2f] bg-linear-to-b from-[#5c5c5c] to-[#707070] pb-0.5 pl-[20px] text-[11px] leading-[15px]"><option>Top</option></select>
              <svg class="pointer-events-none absolute top-0.5 left-0.5 size-[18px]" viewBox="0 0 18 18"><path d="M1.500 5.500l4-4h11v10l-4 5h-11z" fill="#fff" stroke="#333" /><path d="M2 5.500l4-4h10l-4 4z" fill="#8d939e" /><path d="M12 6l4-4M12 6v10M2 6h10" stroke="#333" /></svg>
              <svg class="pointer-events-none absolute top-1.5 right-0.5 size-2.5"><use href="#dn" /></svg>
            </div>
            <button class="flex items-center gap-1 pl-1" aria-label="View manager"><svg class="h-[22px] w-4" viewBox="0 0 16 22"><path d="M.5 5.500h15v11H.5z" fill="#9cc8ea" stroke="#4f87c0" /><path d="M3 8l3-2h7v7l-3 4H3z" fill="#1d78c8" /><path d="M3 8l3-2h7l-3 2z" fill="#e0f4ff" /><path d="M3 8h6v8H3z" fill="#44b0ee" /></svg><svg class="size-2"><use href="#dd" /></svg></button>
          </div>
          <h2 class="flex h-[19px] items-center justify-center gap-1 bg-[#4b4b4b] pb-0.5">View <svg class="size-2.5"><use href="#dn" /></svg></h2>
        </section>

        <section class="flex w-[172px] shrink-0 flex-col border-r border-[#3b3b3b] bg-[#5c5c5c]">
          <div class="flex flex-1 pt-1 pl-0.5">
            <button class="flex h-[72px] w-[44px] flex-col items-center border border-[#2c4470] bg-linear-to-b from-[#86a5d8] to-[#4d6896]"><svg class="size-9" viewBox="0 0 36 36"><path d="M4 12l9-8h20v19l-8 9H4z" fill="#c9d5ea" stroke="#223" /><path d="M4 12h20v20M14 12v20M4 22h20M24 12l9-8M24 22l9-8M19 8v10M9 8h20M23 4l-9 8M28 8v20" fill="none" stroke="#334" /><path d="M24 12L4 32V12z" fill="#8db5ee" fill-opacity=".7" stroke="#334" /><path d="M4 12l9-8h20M13 4v9M4 22h9M14 12v9" fill="none" stroke="#6ea4ff" stroke-width="1.300" /></svg><span class="mt-px">Culling</span></button>
            <button class="flex w-[68px] flex-col items-center"><svg class="size-9" viewBox="0 0 36 36"><path d="M5.500 10.500l7-7h20v22l-7 7h-20z" fill="#fff" stroke="#333" /><path d="M6 12h19v20H6z" fill="#bcd7f5" /><path d="M25 11l7-7v21l-7 7z" fill="#c9ccd6" /><path d="M5 10h21v3H5z" fill="#4c8df0" /><path d="M3 28h5v5H3z" fill="#3f86f5" stroke="#234" /></svg><span class="mt-0.5">No Filter</span><svg class="size-2"><use href="#dd" /></svg></button>
            <button class="flex w-[54px] flex-col items-center"><svg class="size-9" viewBox="0 0 36 36"><path d="M18 5l13 7v15l-13 7-13-7V12z" fill="none" stroke="#ddd" stroke-width="1.200" /><path d="M18 17V6" stroke="#6ea4ff" stroke-width="1.500" /><path d="M18 19L6 24" stroke="#5ab52a" stroke-width="1.500" /><path d="M18 19l12 5" stroke="#ee4b2a" stroke-width="1.500" /><path d="M16 3.500h4v4h-4z" fill="#444" stroke="#6ea4ff" stroke-width="1.500" /><path d="M4 22h4v4H4z" fill="#444" stroke="#5ab52a" stroke-width="1.500" /><path d="M28 22h4v4h-4z" fill="#444" stroke="#ee4b2a" stroke-width="1.500" /><path d="M16 16.500h4v4h-4z" fill="#555" stroke="#eee" stroke-width="1.200" /></svg><span class="mt-px">Move<br />Gizmo</span></button>
            <svg class="mt-[50px] -ml-2 size-2"><use href="#dd" /></svg>
          </div>
          <h2 class="flex h-[19px] items-center justify-center bg-[#4b4b4b] pb-0.5">Selection</h2>
        </section>

        <div class="flex gap-0.5 pt-px pb-0.5 pl-px">
          <button class="flex w-[59px] flex-col items-center bg-linear-to-b from-[#707070] to-[#505050]"><svg class="size-9" viewBox="0 0 36 36"><path d="M4 21l7-5h12l-7 5zM4 17l7-5h12l-7 5z" fill="#fff" stroke="#333" /><path d="M4 12l7-7h13l-7 7z" fill="#fff" stroke="#333" /><path d="M20.500 16.500h12v17h-12z" fill="#eee" stroke="#333" /><path d="M23 19h5v5h-5z" fill="#3d79c9" /><path d="M29 19h2v5h-2zM23 27h8M23 30h8" fill="#999" stroke="#666" /></svg><span class="mt-[3px]">Layers</span><svg class="mt-auto mb-0.5 size-2.5"><use href="#dn" /></svg></button>
          <button class="flex w-[59px] flex-col items-center bg-linear-to-b from-[#707070] to-[#505050]"><svg class="size-6" viewBox="0 0 24 24"><path d="M4.500 5.500h9v14h-9z" fill="none" stroke="#6ea4ff" stroke-dasharray="1 1" /><path d="M6 7h4v4H6zM6 13h4v4H6z" fill="#e6d68a" stroke="#333" /><path d="M11 7l7 7-3 .5 2 4-2 1-2-4-2 2z" fill="#fff7b0" stroke="#333" stroke-width=".8" /></svg><span class="-mt-px">Groups</span><svg class="mt-auto mb-0.5 size-2.5"><use href="#dn" /></svg></button>
          <button class="flex w-[59px] flex-col items-center bg-linear-to-b from-[#707070] to-[#505050]"><svg class="size-9" viewBox="0 0 36 36"><path d="M5.500 10.500h11v6h14v13h-25z" fill="url(#liteV)" stroke="#333" /></svg><span class="mt-[3px]">View</span><svg class="mt-auto mb-0.5 size-2.5"><use href="#dn" /></svg></button>
        </div>
      </div>

      <!-- File tabs -->
      <nav class="flex h-[29px] items-end border-b-[5px] border-[#5c5c5c] bg-[#393939] pl-[18px]">
        <button class="relative h-[22px] w-[128px] text-left text-[#a8a8a8]">
          <svg class="absolute inset-0 size-full" viewBox="0 0 128 22" preserveAspectRatio="none"><path d="M0 22C6 20 4 2 12 1h106c6 1 6 18 10 21z" fill="url(#tabOff)" stroke="#666" /></svg>
          <span class="relative pl-[14px]">Start</span>
        </button>
        <button class="relative -ml-1 flex h-[22px] w-[130px] items-center text-left">
          <svg class="absolute inset-0 size-full" viewBox="0 0 130 22" preserveAspectRatio="none"><path d="M0 22C6 20 4 2 12 1h102c8 1 6 18 16 21z" fill="url(#tabOn)" /></svg>
          <span class="relative flex-1 pl-[13px]">Drawing1*</span>
          <svg class="relative mr-4 size-2.5" viewBox="0 0 10 10"><path d="M1.500 1.500l7 7M8.500 1.500l-7 7" stroke="#444" stroke-width="2" /></svg>
        </button>
        <button class="ml-[3px] h-[18px] w-[22px]" aria-label="New drawing"><svg class="h-[18px] w-[22px]" viewBox="0 0 22 18"><path d="M0 1h15c4 1 6 6 7 14H9C3 14 2 6 0 1z" fill="#5a5a5a" /><path d="M7 8.500h8M11 4.500v8" stroke="#ccc" stroke-width="2" /></svg></button>
      </nav>

      <!-- Drawing area -->
      <main class="relative flex-1 overflow-hidden">
        <svg class="absolute inset-0 size-full" fill="none" stroke="#fff">
          <path d="M512.500 30v418" />
          <path d="M596.500 30.500h56L647.500 83l-2 7.500L638.500 395l-14 52.500-14-52.500L603.500 90.500l-2-7.500zM603.500 90.500h42M624.500 30v417" />
          <!-- small wireframes at the top -->
          <path d="M824.500 10.500l10 3h7l11-1 18-3 18 3 12 1h7l9-3v18l-9-3h-7l-12 1-18 3-18-3-11-1h-7l-10 3zM827.500 12v15M840.500 13.500v13M852.500 12v16M854.500 12v16M870.500 0v30M886.500 12v16M888.500 12v16M900.500 13.500v13M913.500 12v15M824 19.500h84M862 6.500h16M863 9.500h14v3h-14zM877.500 0v12" stroke-width="1.200" />
          <path d="M935 3.500h27.500V0M982 19.500h84M1034 12.500h1" />
          <path d="M1087.500 10.500l16 4 30-6 30 6h6v9h-6l-30 6-30-6-16 5zM1103.500 14v10M1133.500 8v22M1088 19.500h80M1163.500 14v10" stroke-width="1.200" />
          <path d="M1167.500 10.500h12v18h-12zM1169 12.500l14 1h7l7-1 16-3 16 3 8 1h13l9-3v18l-9-2h-13l-8 1-16 3-16-3-7-1h-7l-14 1M1171.500 12v16M1183.500 13v13M1195.500 12v16M1197.500 12v16M1213.500 9v21M1229.500 12v16M1231.500 12v16M1243.500 13v13M1256.500 12v15" stroke-width="1.200" />
          <!-- crosshair -->
          <path d="M785 295.500h31M823 295.500h31M819.500 261v31M819.500 299v31M816.500 292.500h6v6h-6z" />
        </svg>

        <div class="absolute top-[6px] left-[3px] flex gap-px">
          <button>[−]</button><button>[Front]</button><button>[2D Wireframe]</button>
        </div>

        <!-- UCS icon -->
        <svg class="absolute bottom-0 left-0 h-[90px] w-[90px]" viewBox="0 0 90 90">
          <path d="M10.500 29v50.500H61" fill="none" stroke="#fff" />
          <text x="18" y="24" text-anchor="middle" font-family="DejaVu Sans, sans-serif" font-size="18" font-weight="200" fill="#fff">Y</text>
          <text x="71" y="77" text-anchor="middle" font-family="DejaVu Sans, sans-serif" font-size="18" font-weight="200" fill="#fff">X</text>
        </svg>

        <div class="absolute top-[9px] right-[18px] flex items-center gap-2">
          <button aria-label="Minimize drawing"><svg class="size-3" viewBox="0 0 12 12"><path d="M1 7h10v3H1z" fill="#fff" /></svg></button>
          <button aria-label="Restore drawing"><svg class="size-3" viewBox="0 0 12 12"><path d="M2 4h6v6H2zM4.500 1.500h6v7" fill="none" stroke="#fff" stroke-width="1.500" /></svg></button>
          <button aria-label="Close drawing"><svg class="size-3" viewBox="0 0 12 12"><path d="M2 2l8 8M10 2l-8 8" stroke="#fff" stroke-width="2" /></svg></button>
        </div>

        <!-- View cube -->
        <svg class="absolute top-[60px] right-[20px] h-14 w-[104px]" viewBox="0 0 104 56">
          <ellipse cx="54" cy="46" rx="47" ry="4" fill="none" stroke="#454b53" stroke-width="1.500" />
          <path d="M2 46h14M92 46h12M50 50c2-1 6-1 8 0" fill="none" stroke="#b5b8bb" stroke-dasharray="6 1" />
          <path d="M35.500 6.500h37v37h-37z" fill="#b4b4b4" stroke="#85888b" />
          <path d="M42 13h22v24H42z" fill="#a2a8ad" />
          <text x="54" y="28" text-anchor="middle" font-family="Roboto, sans-serif" font-size="9" font-weight="700" fill="#4a515b">TOP</text>
        </svg>
        <button class="absolute top-[150px] right-[37px] flex h-[17px] w-[68px] items-center justify-between rounded border border-[#7b7e8c] bg-[#9a9ca9] px-1 font-['DejaVu_Sans',sans-serif] text-[9px] text-[#454a58]">Unnamed <svg class="size-2" viewBox="0 0 8 8"><path d="M.5 1.500h7L4 6.500z" fill="none" stroke="#7d808c" /></svg></button>

        <!-- Navigation bar -->
        <svg class="absolute top-[192px] right-0 h-[214px] w-[45px]" viewBox="0 0 45 214">
          <rect x="1" y="1" width="60" height="211" rx="4" fill="#5e6368" stroke="#70757a" />
          <g fill="none" stroke="#42474e" stroke-width="1.200">
            <circle cx="17" cy="31" r="11" /><circle cx="17" cy="31" r="6" />
            <path d="M10 84l-5-8c-2-4 2-3 5 1l-1-10c0-3 2-3 3 0l1 5 1-9c0-3 3-3 3 0v9l2-8c1-3 3-2 3 0v20z" />
            <path d="M5 91l16 16M21 91L5 107M5 95v-4h4M5 103v4h4M21 95v-4h-4" /><circle cx="20" cy="105" r="5" />
            <path d="M14 150v-16h-3l5-6 5 6h-3v16zM5 141c3-4 8-4 16-4M10 143l-5 2 5 3" />
            <path d="M5 171h6v6H5zM13 171h6v6h-6zM5 180h16v13H5z" /><path d="M10 183l6 4-6 4z" fill="#42474e" />
          </g>
          <path d="M14 50h6l-3 3zM14 120h6l-3 3zM14 158h6l-3 3z" fill="#3c4147" />
          <path d="M4 57h20M4 165h20" stroke="#70757a" />
        </svg>
      </main>

      <!-- Materials browser palette -->
      <aside class="absolute top-[99px] right-0 bottom-[70px] flex w-6 border-r-2 border-[#6cc5f0]">
        <div class="flex flex-1 flex-col items-center rounded-t border border-[#2e2e2e] bg-[#525252] pt-1 pb-[5px]">
          <button aria-label="Close palette"><svg class="block size-3" viewBox="0 0 12 12"><path d="M2 2l8 8M10 2l-8 8" stroke="#ccc" stroke-width="2" /></svg></button>
          <button class="mt-[7px]" aria-label="Auto-hide"><svg class="block size-3" viewBox="0 0 12 12"><path d="M2.500 1v10M2 3.500h3M2 8.500h3M4 6h7M8 3l3 3-3 3" fill="none" stroke="#ccc" stroke-width="1.300" /></svg></button>
          <button class="mt-[7px]" aria-label="Palette settings"><svg class="block size-3" viewBox="0 0 12 12"><circle cx="6" cy="6" r="3" fill="none" stroke="#ccc" stroke-width="1.500" /><path d="M6 0v2.500M6 9.500V12M0 6h2.500M9.500 6H12M1.500 1.500l2 2M8.500 8.500l2 2M10.500 1.500l-2 2M3.500 8.500l-2 2" stroke="#ccc" stroke-width="1.300" /></svg></button>
          <h2 class="mt-auto rotate-180 text-[11px] text-[#c4c4c4] [writing-mode:vertical-rl]">MATERIALS BROWSER</h2>
          <svg class="mt-3 size-3" viewBox="0 0 12 12"><circle cx="6" cy="6" r="5.500" fill="#eee" /><path d="M3 3h2v2H3zM7 3h2v2H7zM5 5h2v2H5zM3 7h2v2H3zM7 7h2v2H7z" fill="#333" /></svg>
        </div>
      </aside>

      <!-- Layout tabs and status bar -->
      <footer class="flex h-[29px] border-t border-[#5a5a5a] bg-[#393939] pl-[10px]">
        <nav class="flex items-start text-[#b8b8b8]">
          <button class="relative h-[18px] w-[62px] pb-1 font-bold text-white"><svg class="absolute inset-0 size-full" viewBox="0 0 62 18" preserveAspectRatio="none"><path d="M0 0c5 3 3 16 8 17h45c5-1 4-14 9-17z" fill="url(#tabModel)" /></svg><span class="relative">Model</span></button>
          <button class="relative h-[18px] w-[64px] pr-1 pb-1"><svg class="absolute inset-0 size-full" viewBox="0 0 64 18" preserveAspectRatio="none"><path d="M0 0c4 3 1 16 7 17h47c5-1 5-14 10-17z" fill="#565656" stroke="#484848" /></svg><span class="relative">Layout1</span></button>
          <button class="relative h-[18px] w-[66px] pr-1 pb-1"><svg class="absolute inset-0 size-full" viewBox="0 0 66 18" preserveAspectRatio="none"><path d="M0 0c4 3 1 16 7 17h48c5-1 5-14 10-17z" fill="#565656" stroke="#484848" /></svg><span class="relative">Layout2</span></button>
          <button class="w-[25px]" aria-label="New layout"><svg class="h-[17px] w-[25px]" viewBox="0 0 25 17"><path d="M2 16c3 0 2-16 8-16h15c-1 6-2 14-8 16z" fill="#525252" /><path d="M9 8h8M13 4v8" stroke="#ccc" stroke-width="2" /></svg></button>
        </nav>
        <div class="ml-auto flex gap-px bg-[#393939] pb-0.5">
          <button class="w-[50px] border border-[#747474] bg-[#4c4c4c] text-[12px]">MODEL</button>
          <div class="flex w-[65px] items-center border border-[#747474] bg-[#4c4c4c]">
            <button aria-label="Grid"><svg class="size-6" viewBox="0 0 24 24"><path d="M6.500 5v14M10.500 5v14M14.500 5v14M18.500 5v14" stroke="#ddd" stroke-dasharray="2 1" /><path d="M5 7.500h15M5 12.500h15M5 16.500h15" stroke="#bbb" stroke-dasharray="1 1" /></svg></button>
            <button aria-label="Snap"><svg class="size-6" viewBox="0 0 24 24"><path d="M5 6h14M5 9h14M5 12h14M5 15h14M5 18h14" stroke="#2b8cff" stroke-width="1.500" stroke-dasharray="1.500 1.500" /></svg></button>
            <svg class="ml-0.5 size-2.5"><use href="#dn" /></svg>
          </div>
          <div class="flex w-[103px] items-center border border-[#747474] bg-[#4c4c4c]">
            <button aria-label="Ortho"><svg class="size-6" viewBox="0 0 24 24"><path d="M6.500 5v13.500H20M6.500 13.500h5v5" fill="none" stroke="#2b9bff" stroke-width="1.500" /></svg></button>
            <button aria-label="Polar tracking"><svg class="size-6" viewBox="0 0 24 24"><path d="M16 7a6.500 6.500 0 102 5h-7M12 12l6-6" fill="none" stroke="#ccc" stroke-width="1.300" /></svg></button>
            <svg class="ml-0.5 size-2.5"><use href="#dn" /></svg>
            <button aria-label="Isometric drafting"><svg class="size-7" viewBox="0 0 28 28"><path d="M5 5l17 17M14.500 4v20" stroke="#bbb" stroke-width="1.300" /></svg></button>
            <svg class="size-2.5"><use href="#dn" /></svg>
          </div>
          <div class="-ml-px flex w-[65px] items-center border border-[#747474] bg-[#4c4c4c]">
            <button aria-label="Object snap tracking"><svg class="size-6" viewBox="0 0 24 24"><path d="M4 18.500h16M5 18L17 6M10 11h3v3h-3z" fill="none" stroke="#2b9bff" stroke-width="1.500" /></svg></button>
            <button aria-label="Object snap"><svg class="size-6" viewBox="0 0 24 24"><path d="M7.500 6.500h12v12h-12z" fill="none" stroke="#2b9bff" stroke-width="1.500" /><path d="M5.500 4.500h4v4h-4z" fill="#063" stroke="#1fdc1f" stroke-width="1.500" /></svg></button>
            <svg class="ml-0.5 size-2.5"><use href="#dn" /></svg>
          </div>
          <div class="flex w-[107px] items-center border border-[#747474] bg-[#4c4c4c] text-[11px]">
            <button aria-label="Annotation visibility"><svg class="size-6" viewBox="0 0 24 24"><path d="M10 4l2 8 7 6h-5l-2-2-2 2H4l5-5z" fill="#2b9bff" /><circle cx="15" cy="7.500" r="3" fill="#4c4c4c" stroke="#2b9bff" stroke-width="1.500" /></svg></button>
            <button aria-label="Auto scale"><svg class="size-6" viewBox="0 0 24 24"><path d="M10 4l2 8 7 6h-5l-2-2-2 2H4l5-5z" fill="#ccc" /><path d="M17 4l-3 4h4l-3 4" fill="none" stroke="#ccc" stroke-width="1.300" /></svg></button>
            <button aria-label="Annotation scale"><svg class="size-6" viewBox="0 0 24 24"><path d="M12 4l2 8 6 6h-6l-2-2-2 2H4l6-6z" fill="#ccc" /></svg></button>
            <button class="ml-1 flex items-center gap-0.5">1:1 <svg class="size-2.5"><use href="#dn" /></svg></button>
          </div>
          <div class="flex w-10 items-center border border-[#747474] bg-[#4c4c4c]">
            <button class="flex items-center gap-0.5" aria-label="Workspace"><svg class="size-6" viewBox="0 0 24 24"><circle cx="12" cy="12" r="3.500" fill="none" stroke="#ccc" stroke-width="3" /><path d="M12 6v12M6 12h12M8 8l8 8M16 8l-8 8" stroke="#ccc" stroke-width="2.500" /><circle cx="12" cy="12" r="2" fill="#4c4c4c" /></svg><svg class="size-2.5"><use href="#dn" /></svg></button>
          </div>
          <button class="-ml-px w-[27px] border border-[#747474] bg-[#4c4c4c]" aria-label="Annotation monitor"><svg class="mx-auto size-6" viewBox="0 0 24 24"><path d="M5 12h14M12 5v14" stroke="#ddd" stroke-width="2" /></svg></button>
          <button class="w-[26px] border border-[#747474] bg-[#4c4c4c]" aria-label="Isolate objects"><svg class="size-6" viewBox="0 0 24 24"><path d="M4.500 4.500h6v6h-6zM11 13l4 5.500H7z" fill="none" stroke="#ccc" stroke-width="1.300" /><circle cx="16" cy="10" r="3" fill="none" stroke="#ccc" stroke-width="1.300" /></svg></button>
          <button class="w-[26px] border border-[#747474] bg-[#4c4c4c]" aria-label="Hardware acceleration"><svg class="size-6" viewBox="0 0 24 24"><circle cx="12" cy="12" r="7.500" fill="#1261b0" stroke="#2b9bff" stroke-width="1.500" /><path d="M11 15l5-4" stroke="#7cc4ff" stroke-width="1.500" /></svg></button>
          <div class="flex w-[50px] items-center border border-[#747474] bg-[#4c4c4c]">
            <button aria-label="Clean screen"><svg class="size-6" viewBox="0 0 24 24"><path d="M4.500 6.500h15v11h-15z" fill="none" stroke="#ddd" stroke-width="1.300" /><path d="M7 12v4h4zM17 12V8h-4zM7 16l3-3M17 8l-3 3" fill="#ddd" stroke="#ddd" /></svg></button>
            <button aria-label="Customization"><svg class="size-6" viewBox="0 0 24 24"><path d="M5 7h15M5 12h15M5 17h15" stroke="#ccc" stroke-width="2" /></svg></button>
          </div>
        </div>
      </footer>

      <!-- Windows taskbar -->
      <div class="flex h-10 bg-[#000204]">
        <button class="flex w-12 items-center justify-center" aria-label="Start"><svg class="size-4" viewBox="0 0 16 16"><path d="M0 2.200L6.500 1.300v6.200H0zM7.500 1.200L16 0v7.500H7.500zM0 8.500h6.500v6.200L0 13.800zM7.500 8.500H16V16l-8.500-1.200z" fill="#fff" /></svg></button>
        <button class="flex w-12 items-center justify-center" aria-label="Search"><svg class="size-4" viewBox="0 0 16 16"><circle cx="10.500" cy="5.500" r="5" fill="none" stroke="#fff" stroke-width="1.200" /><path d="M7 9.500L.5 15.500" stroke="#fff" stroke-width="1.300" /></svg></button>
        <button class="flex w-12 items-center justify-center" aria-label="Task View"><svg class="size-4" viewBox="0 0 16 16"><path d="M.5 0v2.500h10V0M.5 4.500h10v7H.5zM.5 16v-2.500h10V16M14.500 0v3M14.500 8v8" fill="none" stroke="#fff" /><path d="M13 4h3v3h-3z" fill="#fff" /></svg></button>
        <button class="ml-0.5 flex w-[49px] items-center justify-center" aria-label="Edge"><svg class="size-6" viewBox="0 0 24 24"><path d="M2 11C3 4 8 1.500 12.500 1.500c6 0 10 4 9.500 12H9c0 6 8 6 12 3.500v4.500C11 26 2 21 4 13c1-3 3-5 6-6-1 1-1.500 2-1.500 3.500H16C16 2 6 4 2 11z" fill="#0f7ad8" /></svg></button>
        <button class="flex w-[49px] items-center justify-center" aria-label="File Explorer"><svg class="size-6" viewBox="0 0 24 24"><path d="M1 3h9l1 2h11v16H1z" fill="#fbd86c" /><path d="M1 7h21v14H1z" fill="#ffe79c" /><path d="M5 13h14v8h-4v-4H9v4H5z" fill="#3ba9e0" /></svg></button>
        <button class="relative flex w-[49px] items-center justify-center after:absolute after:bottom-0 after:h-0.5 after:w-10 after:bg-[#76b9ed]" aria-label="Calculator"><svg class="size-6" viewBox="0 0 24 24"><path d="M3 0h18v24H3z" fill="#fff" /><path d="M5 2h14v4H5z" fill="#000" /><path d="M5 9.500h14M5 14.500h14M5 19.500h14" stroke="#111" stroke-width="3" stroke-dasharray="2.500 3" /></svg></button>
        <button class="relative flex w-[49px] items-center justify-center after:absolute after:bottom-0 after:h-0.5 after:w-10 after:bg-[#76b9ed]" aria-label="Chrome"><svg class="size-6" viewBox="0 0 24 24"><circle cx="12" cy="12" r="11" fill="#f9c732" /><path d="M12 12L2.500 6.500A11 11 0 0121.500 7H12z" fill="#dd4b39" /><path d="M12 12l-1 11A11 11 0 012.500 6.500z" fill="#2aa35a" /><path d="M12 12l-9.500-5.500A11 11 0 0112 1z" fill="#dd4b39" /><circle cx="12" cy="12" r="5" fill="#fff" /><circle cx="12" cy="12" r="4" fill="#4285f4" /></svg></button>
        <button class="flex w-[49px] items-center justify-center" aria-label="Snipping Tool"><svg class="size-6" viewBox="0 0 24 24"><ellipse cx="11" cy="13" rx="11" ry="6.500" transform="rotate(-20 11 13)" fill="#8a8f96" /><ellipse cx="12" cy="9" rx="11" ry="6" transform="rotate(-20 12 9)" fill="#f6f6f6" stroke="#d4353a" stroke-width="1.500" /><path d="M12 6l4 9M8 9l9 5" stroke="#999" stroke-width="1.500" /><circle cx="16" cy="19" r="2.500" fill="none" stroke="#2490dd" stroke-width="1.500" /><circle cx="20.500" cy="15.500" r="2.500" fill="none" stroke="#2490dd" stroke-width="1.500" /></svg></button>
        <button class="relative flex w-[49px] items-center justify-center after:absolute after:bottom-0 after:h-0.5 after:w-10 after:bg-[#76b9ed]" aria-label="Discord"><svg class="size-6" viewBox="0 0 24 24"><rect x="1" y="1" width="20" height="18" rx="3" fill="#6f86d2" /><path d="M4 14c0-4 1-7 3-8h8c2 1 3 4 3 8-2 2-4 1-4 0H8c0 1-2 2-4 0z" fill="#fff" /><circle cx="8.500" cy="11" r="1.500" fill="#6f86d2" /><circle cx="13.500" cy="11" r="1.500" fill="#6f86d2" /><circle cx="17" cy="17" r="7" fill="#ee4f4f" /><circle cx="17" cy="17" r="3" fill="#fff" /></svg></button>
        <button class="relative ml-px flex w-12 items-center justify-center bg-[#34373a] after:absolute after:bottom-0 after:h-0.5 after:w-12 after:bg-[#76b9ed]" aria-label="AutoCAD"><svg class="size-6" viewBox="0 0 24 24"><path d="M0 0h24v24H0z" fill="#fbeae4" /><use href="#acad" x="4" y="2" width="16" height="19" /></svg></button>

        <div class="ml-auto flex items-center">
          <button class="w-[36px]" aria-label="People"><svg class="size-4" viewBox="0 0 16 16"><g fill="none" stroke="#fff" stroke-width="1.200"><circle cx="5" cy="8" r="2.500" /><path d="M1 15c0-3 1-4 4-4s4 1 4 4" /><circle cx="11" cy="3.500" r="2.500" /><path d="M9 7.500c1-1 5-1 5 3" /></g></svg></button>
          <button class="w-6" aria-label="Show hidden icons"><svg class="size-4" viewBox="0 0 16 16"><path d="M2.500 10.500L8 5l5.500 5.500" fill="none" stroke="#fff" stroke-width="1.300" /></svg></button>
          <button class="w-6" aria-label="Battery"><svg class="size-4" viewBox="0 0 16 16"><path d="M5.500 4.500H14v7H5" fill="none" stroke="#fff" /><path d="M7 6h6v4H7zM14 7h2v2h-2zM0 4h4v4H0z" fill="#fff" /><path d="M1 2v2M3 2v2M2 8v3h3" stroke="#fff" fill="none" /></svg></button>
          <button class="w-[27px]" aria-label="Volume"><svg class="size-4" viewBox="0 0 16 16"><path d="M.5 5.500H3l4-3.500v12l-4-3.500H.5z" fill="none" stroke="#fff" /><path d="M9 6c1 1 1 3 0 4" fill="none" stroke="#fff" /><path d="M11 4c2 2 2 6 0 8M13 2c3 3 3 9 0 12" fill="none" stroke="#888" /></svg></button>
          <button class="w-[23px]" aria-label="Network"><svg class="size-4" viewBox="0 0 16 16"><path d="M1 14C1 7 7 2 13 2" fill="none" stroke="#777" stroke-width="1.200" /><path d="M4 14c0-5 4-9 9-9M7 14c0-3 3-6 6-6M10 14c0-2 1-3 3-3" fill="none" stroke="#fff" stroke-width="1.300" /></svg></button>
          <button class="w-[23px]">ENG</button>
          <button class="w-[84px] pb-px text-center leading-[18px]">10:07 PM<br />13/05/2020</button>
          <button class="relative mr-3 h-10 w-[30px]" aria-label="Notifications">
            <svg class="mr-auto ml-1 size-[18px]" viewBox="0 0 18 18"><path d="M1 1h16v12H9l-4 4v-4H1z" fill="#fff" /><path d="M3 4.500h12M3 7h12M3 9.500h8" stroke="#000" /></svg>
            <span class="absolute right-0 bottom-1 size-[17px] rounded-full border border-[#777] bg-[#222] text-[11px] leading-[15px]">3</span>
          </button>
          <span class="h-10 w-[5px] border-l border-[#6a6a6a]"></span>
        </div>
      </div>
    </div>
  </body>
</html>
